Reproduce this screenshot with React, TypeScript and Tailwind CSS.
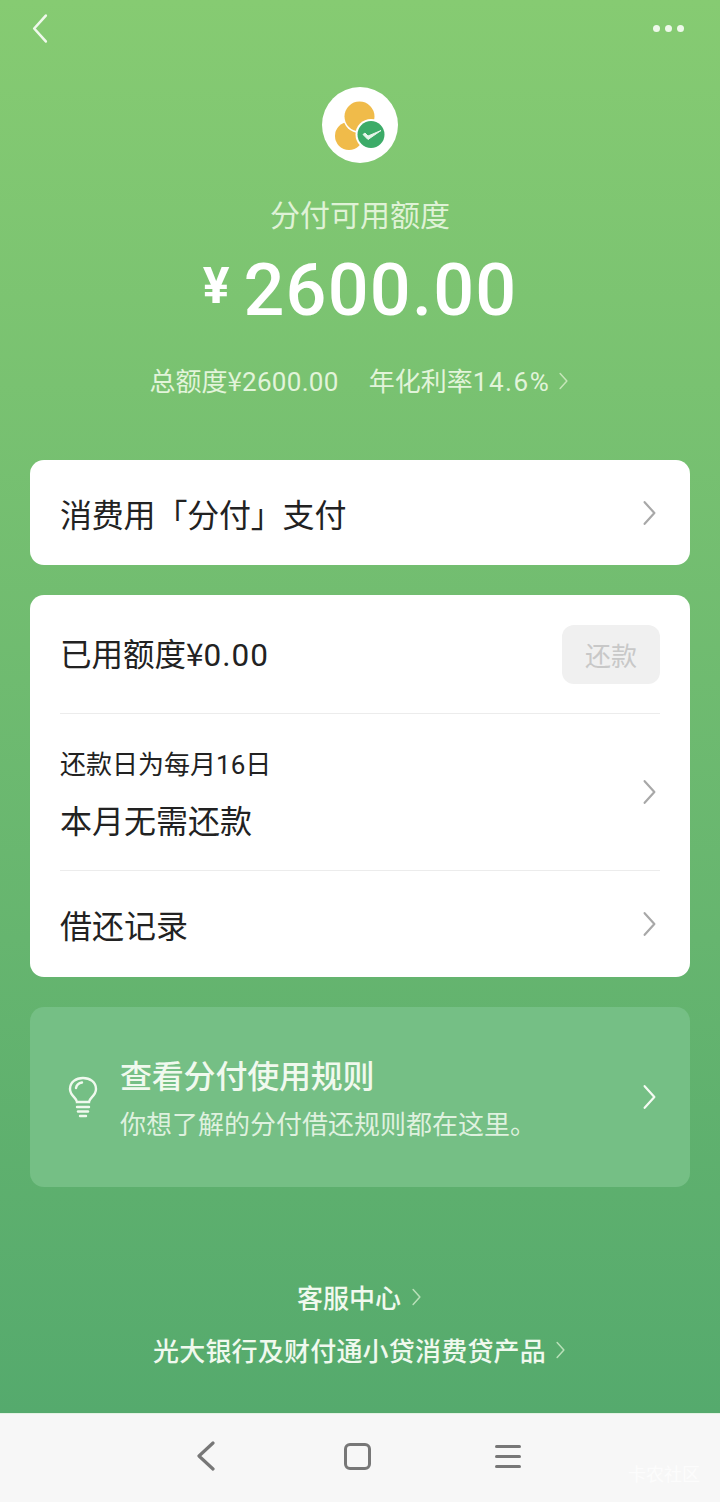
const font = '[font-family:"Noto_Sans_CJK_SC","Noto_Sans",sans-serif]'

function Chevron({ className }: { className: string }) {
  return (
    <svg viewBox="0 0 12 24" fill="none" stroke="currentColor" strokeWidth="2" strokeLinecap="round" strokeLinejoin="round" className={className}>
      <path d="M1.5 2 L10.5 12 L1.5 22" />
    </svg>
  )
}

function Logo() {
  return (
    <div className="w-[76px] h-[76px] rounded-full bg-white flex items-center justify-center">
      <svg viewBox="0 0 76 76" className="w-[76px] h-[76px]">
        <circle cx="27" cy="49" r="14" fill="#f0bb4a" />
        <circle cx="37.5" cy="29.5" r="16.5" fill="#fff" />
        <circle cx="37.5" cy="29.5" r="15" fill="#f0bb4a" />
        <circle cx="49" cy="47.5" r="15.5" fill="#fff" />
        <circle cx="49" cy="47.5" r="13.5" fill="#3cab68" />
        <path d="M41 47.5 L46 52.5 L59 43.5 L46 49 L43 46 Z" fill="#e6f5ea" stroke="#e6f5ea" strokeWidth="1" strokeLinejoin="round" />
      </svg>
    </div>
  )
}

function Bulb() {
  return (
    <svg viewBox="0 0 30 42" fill="none" stroke="currentColor" strokeWidth="2.4" strokeLinecap="round" className="w-[30px] h-[42px]">
      <path d="M9 26 C9 22 2 20 2 13 C2 6 8 2 15 2 C22 2 28 6 28 13 C28 20 21 22 21 26 Z" />
      <path d="M8 12 C8.5 9 11 7 14 6.5" />
      <path d="M9 31 H21" />
      <path d="M10 35.5 H20" />
      <path d="M12 40 H18" />
    </svg>
  )
}

export default function App() {
  return (
    <div className={`w-[720px] h-[1502px] flex flex-col overflow-hidden ${font}`}>
      <div className="h-[1413px] bg-gradient-to-b from-[#86cb72] to-[#55aa6d] flex flex-col items-center">
        <div className="w-full flex justify-between items-center pl-[32px] pr-[36px] pt-[13px] text-[#f0f9ec]">
          <Chevron className="w-[16px] h-[31px] -scale-x-100" />
          <div className="flex gap-[5px]">
            <div className="w-[7px] h-[7px] rounded-full bg-[#eef8ea]" />
            <div className="w-[7px] h-[7px] rounded-full bg-[#eef8ea]" />
            <div className="w-[7px] h-[7px] rounded-full bg-[#eef8ea]" />
          </div>
        </div>

        <div className="mt-[43px]">
          <Logo />
        </div>
        <div className="mt-[28px] text-[30px] leading-[44px] text-[#dff2d6]">分付可用额度</div>
        <div className="mt-[14px] flex items-start h-[84px] text-white font-medium">
          <span className="text-[50px] leading-[74px] mr-[14px] font-bold [font-family:Roboto,sans-serif]">¥</span>
          <span className="text-[72px] leading-[84px] tracking-[1.2px] [font-family:Roboto,sans-serif]">2600.00</span>
        </div>
        <div className="mt-[29px] flex items-center text-[26px] leading-[36px] text-[#e2f4da] -translate-x-[1px]">
          <span>总额度¥<span className="[font-family:Roboto,sans-serif] tracking-[0.3px]">2600.00</span></span>
          <span className="ml-[30px]">年化利率<span className="[font-family:Roboto,sans-serif] tracking-[1.6px]">14.6%</span></span>
          <Chevron className="ml-[9px] w-[9px] h-[18px] text-[#c5e6b8]" />
        </div>

        <div className="mt-[60px] w-[660px] h-[105px] bg-white rounded-[14px] flex items-center justify-between pl-[30px] pr-[33px]">
          <span className="text-[32px] text-[#222] tracking-[-0.2px]">消费用「分付」支付</span>
          <Chevron className="w-[15px] h-[26px] text-[#a8a8a8]" />
        </div>

        <div className="mt-[30px] w-[660px] h-[382px] bg-white rounded-[14px] px-[30px] flex flex-col">
          <div className="h-[119px] shrink-0 flex items-center justify-between border-b border-[#ececec]">
            <span className="text-[31.5px] text-[#222]">已用额度¥<span className="[font-family:Roboto,sans-serif] tracking-[1px]">0.00</span></span>
            <div className="w-[98px] h-[59px] rounded-[12px] bg-[#f0f0f0] text-[#c8c8c8] text-[26px] flex items-center justify-center">还款</div>
          </div>
          <div className="h-[157px] shrink-0 flex items-center justify-between border-b border-[#ececec] pr-[3px]">
            <div className="flex flex-col mt-[1px]">
              <span className="text-[26px] leading-[38px] text-[#222]">还款日为每月<span className="[font-family:Roboto,sans-serif]">16</span>日</span>
              <span className="mt-[13px] text-[32px] leading-[44px] text-[#222]">本月无需还款</span>
            </div>
            <Chevron className="w-[15px] h-[26px] text-[#a8a8a8]" />
          </div>
          <div className="flex-1 flex items-center justify-between pr-[3px]">
            <span className="text-[32px] text-[#222]">借还记录</span>
            <Chevron className="w-[15px] h-[26px] text-[#a8a8a8]" />
          </div>
        </div>

        <div className="mt-[30px] w-[660px] h-[180px] rounded-[14px] bg-[#75bf85] flex items-center pl-[38px] pr-[33px] text-[#f0f9ee]">
          <Bulb />
          <div className="ml-[22px] flex-1 flex flex-col">
            <span className="text-[32px] leading-[44px] font-medium tracking-[-0.2px]">查看分付使用规则</span>
            <span className="mt-[8px] text-[26px] leading-[38px] text-[#dff1df]">你想了解的分付借还规则都在这里。</span>
          </div>
          <Chevron className="w-[15px] h-[26px] text-[#f5fbf3]" />
        </div>

        <div className="mt-[91px] flex items-center text-[26px] leading-[38px] text-[#f0f9ee] font-medium -translate-x-[1px]">
          <span>客服中心</span>
          <Chevron className="ml-[11px] w-[9px] h-[18px] text-[#b9e0b9]" />
        </div>
        <div className="mt-[15px] flex items-center text-[26px] leading-[38px] tracking-[0.2px] text-[#f0f9ee] font-medium -translate-x-[1px]">
          <span>光大银行及财付通小贷消费贷产品</span>
          <Chevron className="ml-[10px] w-[9px] h-[18px] text-[#b9e0b9]" />
        </div>
      </div>

      <div className="relative flex-1 bg-[#f7f7f7] border-t border-[#e4f2e4] flex items-center justify-center pb-[4px]">
        <div className="flex items-center pr-[2px]">
          <svg viewBox="0 0 18 30" fill="none" stroke="#777" strokeWidth="3.2" strokeLinecap="round" strokeLinejoin="round" className="w-[18px] h-[30px]">
            <path d="M16 2 L2 15 L16 28" />
          </svg>
          <div className="ml-[129px] w-[27px] h-[27px] rounded-[6px] border-[3px] border-[#777]" />
          <div className="ml-[124px] flex flex-col gap-[7px]">
            <div className="w-[26px] h-[3px] bg-[#777] rounded-full" />
            <div className="w-[26px] h-[3px] bg-[#777] rounded-full" />
            <div className="w-[26px] h-[3px] bg-[#777] rounded-full" />
          </div>
        </div>
        <span className="absolute right-[20px] bottom-[17px] text-[18px] leading-[24px] text-white/70">卡农社区</span>
      </div>
    </div>
  )
}
